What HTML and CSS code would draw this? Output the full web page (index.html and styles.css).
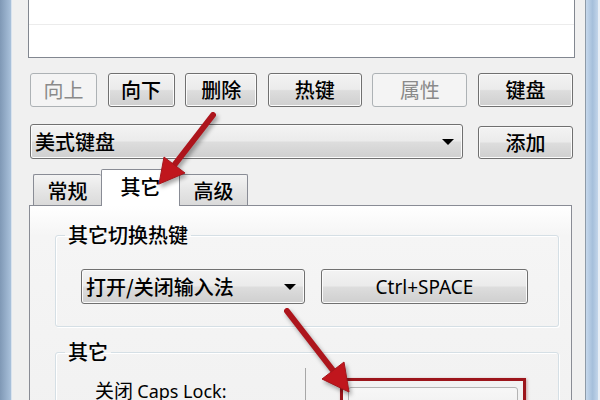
FILE: index.html
```html
<!DOCTYPE html>
<html lang="zh-CN">
<head>
  <meta charset="UTF-8">
  <title>文本服务和输入语言</title>
  <link rel="stylesheet" href="styles.css">
</head>
<body>
  <div class="window">
    <div class="frame-left"></div>
    <div class="dialog">
      <div class="listbox">
        <div class="list-row"></div>
      </div>

      <div class="btn-row">
        <button class="btn w67 disabled">向上</button>
        <button class="btn w67">向下</button>
        <button class="btn w72">删除</button>
        <button class="btn w94">热键</button>
        <button class="btn w95 disabled">属性</button>
        <button class="btn w95">键盘</button>
      </div>

      <div class="combo-row">
        <div class="combo layout-combo"><span>美式键盘</span><i class="arrow"></i></div>
        <button class="btn w95 add-btn">添加</button>
      </div>

      <div class="tabs">
        <div class="tab first">常规</div>
        <div class="tab active">其它</div>
        <div class="tab last">高级</div>
      </div>

      <div class="panel">
        <fieldset class="group">
          <legend>其它切换热键</legend>
          <div class="group-row">
            <div class="combo hotkey-combo"><span>打开/关闭输入法</span><i class="arrow"></i></div>
            <button class="btn hotkey-btn">Ctrl+SPACE</button>
          </div>
        </fieldset>

        <fieldset class="group second">
          <legend>其它</legend>
          <div class="caps-row">
            <div class="caps-label">关闭 <span class="latin">Caps Lock:</span></div>
            <div class="divider"></div>
            <div class="highlight">
              <div class="inner-btn"></div>
            </div>
          </div>
        </fieldset>
      </div>
    </div>
    <div class="frame-right"></div>

    <!-- annotation arrows drawn over the dialog -->
    <svg class="arrows" width="600" height="400" viewBox="0 0 600 400">
      <g class="arrow-mark">
        <line x1="213" y1="115" x2="172" y2="168" />
        <polygon points="159,184 185,173 164,157" />
      </g>
      <g class="arrow-mark">
        <line x1="287" y1="311" x2="335" y2="373" />
        <polygon points="349,392 344,362 322,379" />
      </g>
    </svg>
  </div>
</body>
</html>
```

FILE: styles.css
```css
body {
  margin: 0;
  width: 600px;
  height: 400px;
  overflow: hidden;
  font-family: "Noto Sans CJK SC", "Noto Sans", sans-serif;
  color: #000;
}
.window {
  position: relative;
  display: flex;
  height: 400px;
  overflow: hidden;
}
.frame-left {
  width: 11px;
  background: linear-gradient(90deg, #7f98b5, #a9c1db);
  border-right: 1px solid #d9e3ee;
}
.frame-right {
  width: 12px;
  border-left: 1px solid #8d9aa7;
  border-right: 2px solid #e9eff6;
  background: linear-gradient(90deg, #c6d8ec, #a5bfdb 55%, #c2d5ea);
}
.dialog {
  flex: 1;
  background: #f0f0f0;
  padding: 0 10px 0 16px;
  display: flex;
  flex-direction: column;
}
.dialog > * {
  flex-shrink: 0;
}
.listbox {
  height: 57px;
  background: #fff;
  border: 1px solid #828790;
  border-top: none;
}
.list-row {
  height: 24px;
  border-bottom: 1px solid #ececec;
}
.btn-row {
  display: flex;
  justify-content: space-between;
  margin: 15px 2px 0 2px;
}
.btn {
  height: 34px;
  padding: 0;
  border: 1px solid #707070;
  border-radius: 3px;
  background: linear-gradient(#f3f3f3 0%, #ebebeb 48%, #dddddd 52%, #cfcfcf 100%);
  box-shadow: inset 0 0 0 1px #fbfbfb;
  font-family: "Noto Sans CJK SC", sans-serif;
  font-size: 20px;
  font-weight: 500;
  line-height: 30px;
  color: #000;
}
.btn.disabled {
  border-color: #adb2b5;
  background: #f4f4f4;
  box-shadow: none;
  color: #8a8a8a;
  font-weight: 400;
}
.w67 { width: 67px; }
.w72 { width: 72px; }
.w94 { width: 94px; }
.w95 { width: 95px; }
.combo-row {
  display: flex;
  justify-content: space-between;
  align-items: flex-end;
  margin: 17px 2px 0 2px;
}
.combo {
  box-sizing: border-box;
  height: 35px;
  display: flex;
  align-items: center;
  justify-content: space-between;
  padding: 0 8px 0 4px;
  border: 1px solid #707070;
  border-radius: 3px;
  background: linear-gradient(#f3f3f3 0%, #ebebeb 48%, #dddddd 52%, #cfcfcf 100%);
  box-shadow: inset 0 0 0 1px #fbfbfb;
  font-size: 20px;
  font-weight: 500;
}
.arrow {
  width: 0;
  height: 0;
  border-left: 6px solid transparent;
  border-right: 6px solid transparent;
  border-top: 6px solid #000;
}
.layout-combo {
  width: 433px;
}
.add-btn {
  height: 33px;
}
.tabs {
  display: flex;
  align-items: flex-end;
  height: 36px;
  margin: 10px 0 0 5px;
  position: relative;
  z-index: 1;
}
.tab {
  box-sizing: border-box;
  height: 31px;
  border: 1px solid #898c95;
  border-bottom: none;
  border-radius: 2px 2px 0 0;
  background: linear-gradient(#f4f4f4, #e6e6e6 50%, #dadada);
  font-size: 20px;
  font-weight: 500;
  line-height: 32px;
  text-align: center;
}
.tab.first {
  width: 68px;
  border-right: none;
}
.tab.last {
  width: 68px;
  border-left: none;
}
.tab.active {
  width: 79px;
  height: 37px;
  margin-bottom: -1px;
  background: #fff;
  line-height: 34px;
}
.panel {
  flex: 1 0 auto;
  margin: 0 3px 0 1px;
  padding: 0 12px 0 25px;
  border: 1px solid #898c95;
  border-bottom: none;
  background: linear-gradient(#ffffff 0, #f5f5f5 30px, #f1f1f1 100%);
}
.group {
  margin: 17px 0 0 0;
  padding: 0 0 22px 0;
  border: 1px solid #d5dfe5;
  border-radius: 3px;
  box-shadow: inset 1px 1px 0 #fff, 1px 1px 0 #fff;
}
.group legend {
  margin-left: 9px;
  padding: 0 3px;
  font-size: 20px;
  font-weight: 500;
  line-height: 24px;
}
.group-row {
  display: flex;
  gap: 16px;
  padding: 22px 0 0 25px;
}
.hotkey-combo {
  width: 224px;
}
.hotkey-btn {
  width: 207px;
  height: 35px;
  font-family: "Noto Sans", sans-serif;
  font-size: 19px;
  font-weight: 400;
}
.group.second {
  margin-top: 13px;
  padding-bottom: 0;
}
.caps-row {
  display: flex;
  padding: 4px 0 0 39px;
}
.caps-label {
  width: 210px;
  margin-top: 10px;
  font-size: 19px;
  line-height: 24px;
}
.latin {
  font-family: "Noto Sans", sans-serif;
  font-size: 18px;
}
.divider {
  width: 1px;
  height: 40px;
  background: #a7a7a7;
}
.highlight {
  width: 170px;
  height: 40px;
  margin: 10px 0 0 34px;
  border: 3px solid #9c151b;
  box-shadow: 1px 1px 3px rgba(120, 0, 0, 0.35);
  padding: 6px 5px 0 5px;
}
.inner-btn {
  height: 34px;
  border: 1px solid #b4b4b4;
  border-radius: 3px;
  background: linear-gradient(#f7f7f7, #ececec);
}
.arrows {
  position: absolute;
  left: 0;
  top: 0;
  pointer-events: none;
  z-index: 2;
}
.arrow-mark {
  filter: drop-shadow(2px 3px 2px rgba(0, 0, 0, 0.35));
}
.arrow-mark line {
  stroke: #ad151c;
  stroke-width: 6;
  stroke-linecap: round;
}
.arrow-mark polygon {
  fill: #c0161d;
  stroke: #a5141a;
  stroke-width: 1;
  stroke-linejoin: round;
}
```
